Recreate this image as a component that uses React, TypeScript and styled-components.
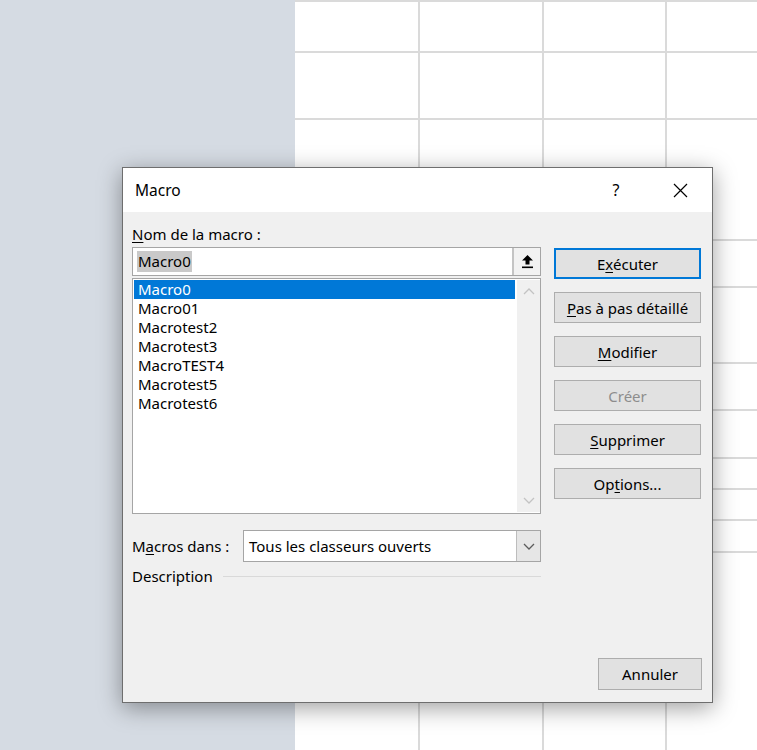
import styled, { createGlobalStyle } from "styled-components";

const GlobalStyle = createGlobalStyle`
  html, body {
    margin: 0;
    padding: 0;
  }
  body {
    width: 757px;
    height: 750px;
    overflow: hidden;
    background: #ffffff;
    font-family: "Noto Sans", "Liberation Sans", sans-serif;
    color: #000;
  }
`;

const rowHeights = [51, 67, 121, 47, 76, 47, 48, 31, 31, 32, 199];
const macros = [
  "Macro0",
  "Macro01",
  "Macrotest2",
  "Macrotest3",
  "MacroTEST4",
  "Macrotest5",
  "Macrotest6",
];

const Page = styled.div`
  position: relative;
  display: flex;
  width: 757px;
  height: 750px;
`;

const SidePanel = styled.div`
  width: 295px;
  flex-shrink: 0;
  background: #d5dbe3;
`;

const Sheet = styled.div<{ $rows: string }>`
  flex: 1;
  display: grid;
  grid-template-columns: 123px 124px 123px 1fr;
  grid-template-rows: ${(p) => p.$rows};
  background: #fff;
  overflow: hidden;
`;

const Cell = styled.div<{ $first: boolean }>`
  box-sizing: border-box;
  border-top: 2px solid #dadada;
  border-left: ${(p) => (p.$first ? "none" : "2px solid #dadada")};
`;

const Dialog = styled.div`
  position: absolute;
  left: 122px;
  top: 167px;
  width: 591px;
  height: 536px;
  box-sizing: border-box;
  border: 1px solid #6e6e6e;
  background: #f0f0f0;
  box-shadow: 0 5px 22px rgba(0, 0, 0, 0.38);
  display: flex;
  flex-direction: column;
  font-size: 15px;
`;

const TitleBar = styled.div`
  height: 44px;
  flex-shrink: 0;
  background: #fff;
  display: flex;
  align-items: center;
  padding-left: 12px;
`;

const Title = styled.div`
  flex: 1;
  font-size: 15.5px;
  line-height: 20px;
`;

const TitleButton = styled.div<{ $w: number }>`
  width: ${(p) => p.$w}px;
  height: 44px;
  display: flex;
  align-items: center;
  justify-content: center;
  font-size: 16px;
`;

const Body = styled.div`
  flex: 1;
  display: flex;
  flex-direction: column;
  padding: 12px 10px 12px 9px;
`;

const TopArea = styled.div`
  display: flex;
  gap: 13px;
`;

const LeftCol = styled.div`
  width: 409px;
  display: flex;
  flex-direction: column;
`;

const RightCol = styled.div`
  width: 147px;
  margin-top: 24px;
  display: flex;
  flex-direction: column;
  gap: 13px;
`;

const Label = styled.div`
  line-height: 20px;
  white-space: nowrap;
`;

const Key = styled.span`
  text-decoration: underline;
  text-underline-offset: 2px;
  text-decoration-thickness: 1px;
`;

const NameInput = styled.div`
  margin-top: 3px;
  height: 29px;
  box-sizing: border-box;
  border: 1px solid #a5a5a5;
  background: #fff;
  display: flex;
  align-items: stretch;
`;

const InputText = styled.div`
  flex: 1;
  display: flex;
  align-items: center;
  padding-left: 4px;
`;

const Selected = styled.span`
  background: #c9c9c9;
  line-height: 21px;
  padding: 0 1px;
`;

const ArrowButton = styled.div`
  width: 28px;
  box-sizing: border-box;
  border-left: 2px solid #c4c4c4;
  background: #f2f2f2;
  display: flex;
  align-items: center;
  justify-content: center;
`;

const ListBox = styled.div`
  margin-top: 2px;
  height: 236px;
  box-sizing: border-box;
  border: 1px solid #a5a5a5;
  background: #fff;
  display: flex;
  padding: 1px 0 1px 1px;
`;

const Items = styled.div`
  flex: 1;
  margin-right: 2px;
`;

const Item = styled.div<{ $selected?: boolean }>`
  height: 19px;
  line-height: 19px;
  padding-left: 4px;
  background: ${(p) => (p.$selected ? "#0078d7" : "transparent")};
  color: ${(p) => (p.$selected ? "#fff" : "#000")};
`;

const ScrollBar = styled.div`
  width: 23px;
  background: #f0f0f0;
  display: flex;
  flex-direction: column;
  justify-content: space-between;
  align-items: center;
  padding: 8px 0;
`;

const Button = styled.div<{ $default?: boolean; $disabled?: boolean }>`
  height: 31px;
  box-sizing: border-box;
  border: ${(p) => (p.$default ? "2px solid #0078d7" : "1px solid #adadad")};
  background: #e1e1e1;
  color: ${(p) => (p.$disabled ? "#8d8d8d" : "#000")};
  display: flex;
  align-items: center;
  justify-content: center;
  white-space: nowrap;
`;

const ComboRow = styled.div`
  width: 409px;
  margin-top: 16px;
  display: flex;
  align-items: center;
`;

const ComboLabel = styled(Label)`
  width: 111px;
`;

const Combo = styled.div`
  flex: 1;
  height: 32px;
  box-sizing: border-box;
  border: 1px solid #a5a5a5;
  background: #fff;
  display: flex;
`;

const ComboText = styled.div`
  flex: 1;
  display: flex;
  align-items: center;
  padding-left: 5px;
`;

const ComboButton = styled.div`
  width: 23px;
  border-left: 1px solid #bdbdbd;
  background: #e6e6e6;
  display: flex;
  align-items: center;
  justify-content: center;
`;

const DescRow = styled.div`
  width: 409px;
  margin-top: 4px;
  display: flex;
  align-items: center;
  gap: 10px;
`;

const Rule = styled.div`
  flex: 1;
  height: 1px;
  background: #d9d9d9;
`;

const Footer = styled.div`
  margin-top: auto;
  display: flex;
  justify-content: flex-end;
`;

const CancelButton = styled(Button)`
  width: 104px;
  height: 32px;
`;

const UploadIcon = () => (
  <svg width="13" height="15" viewBox="0 0 13 15">
    <polygon points="6.5,1 12,6.5 8.5,6.5 8.5,10.5 4.5,10.5 4.5,6.5 1,6.5" fill="#000" />
    <rect x="1" y="12.5" width="11" height="1.6" fill="#000" />
  </svg>
);

const Chevron = ({ up, color }: { up?: boolean; color: string }) => (
  <svg width="12" height="7" viewBox="0 0 12 7">
    <polyline
      points={up ? "1,6 6,1 11,6" : "1,1 6,6 11,1"}
      fill="none"
      stroke={color}
      strokeWidth="1.3"
    />
  </svg>
);

const CloseIcon = () => (
  <svg width="15" height="15" viewBox="0 0 15 15">
    <path d="M1 1 L14 14 M14 1 L1 14" stroke="#000" strokeWidth="1.2" />
  </svg>
);

export default function App() {
  return (
    <>
      <GlobalStyle />
      <Page>
        <SidePanel />
        <Sheet $rows={rowHeights.map((h) => h + "px").join(" ")}>
          {rowHeights.map((_, r) =>
            [0, 1, 2, 3].map((c) => <Cell key={r + "-" + c} $first={c === 0} />)
          )}
        </Sheet>

        <Dialog>
          <TitleBar>
            <Title>Macro</Title>
            <TitleButton $w={40}>?</TitleButton>
            <TitleButton $w={23} />
            <TitleButton $w={42}>
              <CloseIcon />
            </TitleButton>
            <TitleButton $w={11} />
          </TitleBar>

          <Body>
            <TopArea>
              <LeftCol>
                <Label>
                  <Key>N</Key>om de la macro :
                </Label>
                <NameInput>
                  <InputText>
                    <Selected>Macro0</Selected>
                  </InputText>
                  <ArrowButton>
                    <UploadIcon />
                  </ArrowButton>
                </NameInput>
                <ListBox>
                  <Items>
                    {macros.map((m, i) => (
                      <Item key={m} $selected={i === 0}>
                        {m}
                      </Item>
                    ))}
                  </Items>
                  <ScrollBar>
                    <Chevron up color="#c3c3c3" />
                    <Chevron color="#c3c3c3" />
                  </ScrollBar>
                </ListBox>
              </LeftCol>

              <RightCol>
                <Button $default>
                  <span>
                    E<Key>x</Key>écuter
                  </span>
                </Button>
                <Button>
                  <span>
                    <Key>P</Key>as à pas détaillé
                  </span>
                </Button>
                <Button>
                  <span>
                    <Key>M</Key>odifier
                  </span>
                </Button>
                <Button $disabled>Créer</Button>
                <Button>
                  <span>
                    <Key>S</Key>upprimer
                  </span>
                </Button>
                <Button>
                  <span>
                    Op<Key>t</Key>ions...
                  </span>
                </Button>
              </RightCol>
            </TopArea>

            <ComboRow>
              <ComboLabel>
                M<Key>a</Key>cros dans :
              </ComboLabel>
              <Combo>
                <ComboText>Tous les classeurs ouverts</ComboText>
                <ComboButton>
                  <Chevron color="#5c5c5c" />
                </ComboButton>
              </Combo>
            </ComboRow>

            <DescRow>
              <Label>Description</Label>
              <Rule />
            </DescRow>

            <Footer>
              <CancelButton>Annuler</CancelButton>
            </Footer>
          </Body>
        </Dialog>
      </Page>
    </>
  );
}
